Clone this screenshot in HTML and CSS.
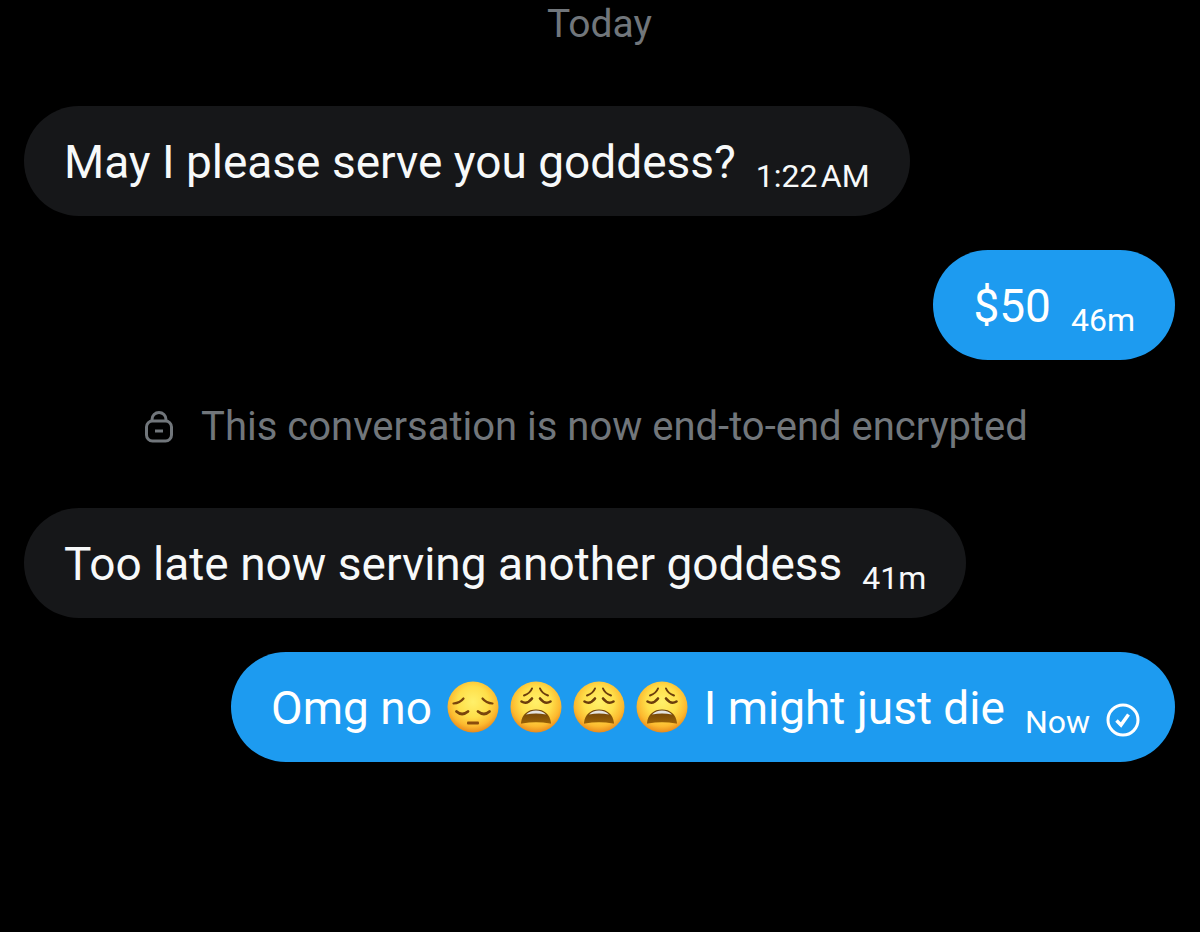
FILE: index.html
```html
<!DOCTYPE html>
<html lang="en">
<head>
<meta charset="utf-8">
<meta name="viewport" content="width=device-width, initial-scale=1">
<title>Messages</title>
<link rel="stylesheet" href="styles.css">
</head>
<body>
<svg class="defs" aria-hidden="true">
  <defs>
    <radialGradient id="face" cx="50%" cy="40%" r="60%">
      <stop offset="0" stop-color="#fff06a"/>
      <stop offset=".5" stop-color="#ffdf4a"/>
      <stop offset=".8" stop-color="#fcb92f"/>
      <stop offset="1" stop-color="#e98a1c"/>
    </radialGradient>
    <linearGradient id="mouth" x1="0" y1="0" x2="0" y2="1">
      <stop offset="0" stop-color="#6b4008"/>
      <stop offset="1" stop-color="#9a6206"/>
    </linearGradient>
    <symbol id="pensive" viewBox="0 0 52 52">
      <circle cx="26" cy="26" r="25.5" fill="url(#face)"/>
      <g fill="none" stroke="#7a450c" stroke-width="2.2" stroke-linecap="round">
        <path d="M6.500 22.500Q13 22 16.500 17.500M45.500 22.500Q39 22 35.500 17.500"/>
        <path stroke-width="2.800" d="M9.500 30.500Q15 35.500 21 30.500M31 30.500Q37 35.500 42.500 30.500"/>
      </g>
      <rect x="20" y="40.500" width="12" height="3" rx="1" fill="#8a4c0c"/>
    </symbol>
    <symbol id="weary" viewBox="0 0 52 52">
      <circle cx="26" cy="26" r="25.500" fill="url(#face)"/>
      <g fill="none" stroke="#6b3d0c" stroke-width="2" stroke-linecap="round">
        <path d="M14 14.500Q20 12.500 22 7.500M38 14.500Q32 12.500 30 7.500"/>
        <path stroke-width="2.600" d="M11.500 20.500Q17 24 22 17.500M40.500 20.500Q35 24 30 17.500"/>
      </g>
      <path d="M11 42C12 33 18 28.500 26 28.500S40 33 41 42Q41 43 40 42.500Q26 40 12 42.500Q11 43 11 42Z" fill="url(#mouth)"/>
      <path d="M16 33.500Q20 29.500 26 29.500T36 33.500Q26 31.500 16 33.500Z" fill="#e4e3df"/>
    </symbol>
  </defs>
</svg>
<main class="chat">
  <p class="day">Today</p>
  <div class="bubble received">
    <p class="text">May I please serve you goddess?</p>
    <time class="time">1:22&#8202;AM</time>
  </div>
  <div class="bubble sent">
    <p class="text">$50</p>
    <time class="time">46m</time>
  </div>
  <div class="notice">
    <svg class="lock" viewBox="0 0 28 34" fill="none" stroke="currentColor" stroke-width="3" aria-hidden="true">
      <rect x="1.500" y="11" width="25" height="20" rx="6"/>
      <path d="M7 11V9.500a7 7 0 0 1 14 0V11M10 21h8"/>
    </svg>
    <p class="notice-text">This conversation is now end-to-end encrypted</p>
  </div>
  <div class="bubble received">
    <p class="text">Too late now serving another goddess</p>
    <time class="time">41m</time>
  </div>
  <div class="bubble sent with-status">
    <p class="text">Omg no
      <span class="emojis"><svg class="emoji" role="img" aria-label="Pensive face"><use href="#pensive"/></svg><svg class="emoji" role="img" aria-label="Weary face"><use href="#weary"/></svg><svg class="emoji" role="img" aria-label="Weary face"><use href="#weary"/></svg><svg class="emoji" role="img" aria-label="Weary face"><use href="#weary"/></svg></span>
      I might just die</p>
    <time class="time">Now</time>
    <svg class="status" viewBox="0 0 34 34" fill="none" stroke="currentColor" stroke-width="3" role="img" aria-label="Sent">
      <circle cx="17" cy="17" r="15"/>
      <path stroke-width="3.500" d="M10.500 17.500l4.500 4.500 7.500-10.500"/>
    </svg>
  </div>
</main>
</body>
</html>
```
FILE: styles.css
```css
* { box-sizing: border-box; }
body {
  margin: 0;
  background: #000;
  color: #f7f9f9;
  font-family: Roboto, "Liberation Sans", sans-serif;
}
p { margin: 0; }
.defs { position: absolute; width: 0; height: 0; }
.chat {
  display: flex;
  flex-direction: column;
  padding: 0 25px 0 24px;
}
.day {
  align-self: center;
  margin-bottom: 58px;
  color: #71767b;
  font-size: 39px;
  line-height: 48px;
}
.bubble {
  display: flex;
  align-items: center;
  gap: 20px;
  max-width: 100%;
  min-height: 110px;
  padding: 23px 40px;
  border-radius: 55px;
}
.received { align-self: flex-start; background: #161719; }
.sent { align-self: flex-end; margin-top: 34px; background: #1d9bf0; color: #fff; }
.text { padding-top: 2px; font-size: 46px; line-height: 62px; }
.time {
  padding-top: 30px;
  font-size: 32px;
  line-height: 32px;
  white-space: nowrap;
}
.with-status { padding-right: 35px; }
.emojis { display: inline-flex; gap: 11px; padding: 0 4px; vertical-align: -9px; }
.emoji { width: 52px; height: 52px; }
.status { flex: none; width: 34px; height: 34px; margin: 26px 0 0 -4px; }
.notice {
  display: flex;
  justify-content: center;
  align-items: center;
  gap: 28px;
  margin: 42px 0 56px;
  padding-right: 26px;
  color: #71767b;
}
.lock { flex: none; width: 28px; height: 34px; }
.notice-text { font-size: 40px; line-height: 50px; }
```
